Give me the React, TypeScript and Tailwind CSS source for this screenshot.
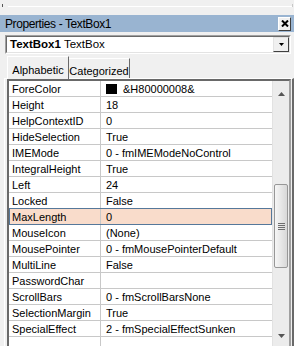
import clsx from "clsx";

const rows: { name: string; value: string; swatch?: boolean; selected?: boolean }[] = [
  { name: "ForeColor", value: "&H80000008&", swatch: true },
  { name: "Height", value: "18" },
  { name: "HelpContextID", value: "0" },
  { name: "HideSelection", value: "True" },
  { name: "IMEMode", value: "0 - fmIMEModeNoControl" },
  { name: "IntegralHeight", value: "True" },
  { name: "Left", value: "24" },
  { name: "Locked", value: "False" },
  { name: "MaxLength", value: "0", selected: true },
  { name: "MouseIcon", value: "(None)" },
  { name: "MousePointer", value: "0 - fmMousePointerDefault" },
  { name: "MultiLine", value: "False" },
  { name: "PasswordChar", value: "" },
  { name: "ScrollBars", value: "0 - fmScrollBarsNone" },
  { name: "SelectionMargin", value: "True" },
  { name: "SpecialEffect", value: "2 - fmSpecialEffectSunken" },
];

const Arrow = ({ up }: { up?: boolean }) => (
  <svg width="7" height="4" viewBox="0 0 7 4">
    <polygon points={up ? "3.5,0 7,4 0,4" : "0,0 7,0 3.5,4"} fill="#555" />
  </svg>
);

const ScrollBar = () => {
  return (
    <div className="flex w-[17px] shrink-0 flex-col border-l border-[#e2e2e2] bg-[#ececec]">
      <div className="flex h-[20px] items-end justify-center pb-[5px]">
        <Arrow up />
      </div>
      {/* thumb */}
      <div className="ml-[1px] mr-[1px] mt-[83px] flex h-[84px] items-center justify-center rounded-[2px] border border-[#979797] bg-linear-to-r from-[#f6f6f6] to-[#d8d8d8]">
        <div className="flex flex-col gap-[1px]">
          {[0, 1, 2, 3].map((i) => (
            <div key={i} className="h-px w-[7px] bg-[#6e6e6e]" />
          ))}
        </div>
      </div>
      <div className="flex-1" />
      <div className="flex h-[17px] items-start justify-center pt-[5px]">
        <Arrow />
      </div>
    </div>
  );
};

export default function App() {
  return (
    <div className="h-[346px] w-[300px] overflow-hidden bg-white font-['Liberation_Sans',Arial,sans-serif] text-[11px] text-black">
      <div className="flex h-full w-[294px] flex-col bg-[#f0f0f0]">
        {/* top strip */}
        <div className="flex h-[15px] shrink-0 items-start pt-[4px]">
          <div className="ml-[2px] h-[3px] w-px bg-[#555]" />
          <div className="ml-[5px] mt-[2px] h-px w-[284px] bg-white" />
          <div className="mt-0 h-[3px] w-px bg-[#c8c8c8]" />
        </div>

        {/* title bar */}
        <div className="flex h-[17px] shrink-0 items-center bg-[#99b4d1] pl-[5px] pr-[3px]">
          <span className="text-[12px] tracking-[-0.4px] whitespace-nowrap">Properties - TextBox1</span>
          <button className="ml-auto flex h-[14px] w-[13px] items-center justify-center border border-b-[#404040] border-l-white border-r-[#404040] border-t-white bg-[#f0f0f0]">
            <svg width="8" height="7" viewBox="0 0 8 7">
              <path d="M1 0.5 L7 6.5 M7 0.5 L1 6.5" stroke="#000" strokeWidth="2" />
            </svg>
          </button>
        </div>

        {/* object combo */}
        <div className="ml-[5px] mr-[3px] mt-[3px] h-[19px] shrink-0 border border-b-white border-l-[#a0a0a0] border-r-white border-t-[#a0a0a0]">
          <div className="flex h-full items-center border border-b-[#e3e3e3] border-l-[#696969] border-r-[#e3e3e3] border-t-[#696969] bg-white pl-[3px]">
            <span className="text-[11.5px] whitespace-nowrap">
              <b>TextBox1</b> TextBox
            </span>
            <div className="ml-auto flex h-[15px] w-[16px] items-center justify-center border border-b-[#404040] border-l-[#e3e3e3] border-r-[#404040] border-t-[#e3e3e3] bg-[#f0f0f0]">
              <svg width="5" height="3" viewBox="0 0 5 3">
                <polygon points="0,0 5,0 2.5,3" fill="#000" />
              </svg>
            </div>
          </div>
        </div>

        {/* tabs */}
        <div className="mt-[2px] flex h-[22px] shrink-0 items-end pl-[7px]">
          <div className="relative z-10 -mb-px flex h-[23px] w-[62px] items-start justify-center border border-b-0 border-l-white border-r-[#696969] border-t-white bg-[#f0f0f0] pt-[5px]">
            Alphabetic
          </div>
          <div className="flex h-[20px] w-[61px] items-start justify-center border border-b-0 border-l-0 border-r-[#696969] border-t-white pt-[4px]">
            Categorized
          </div>
        </div>

        {/* tab panel */}
        <div className="ml-[4px] flex min-h-0 flex-1 flex-col border-l border-r-2 border-t border-l-white border-r-[#696969] border-t-white pl-[2px] pr-px">
          <div className="flex min-h-0 flex-1 border-2 border-b-0 border-l-[#696969] border-r-[#a0a0a0] border-t-[#696969] bg-white">
            <div className="min-w-0 flex-1">
              {rows.map((row) => (
                <div
                  key={row.name}
                  className={clsx(
                    "flex h-[16px] border-b",
                    row.selected
                      ? "border-[#56789a] bg-[#f9dccb] shadow-[inset_1px_0_0_#56789a,inset_-1px_0_0_#56789a,0_-1px_0_#56789a]"
                      : "border-[#c8c8c8]"
                  )}
                >
                  <div className="w-[92px] shrink-0 border-r border-[#c8c8c8] pl-[3px] leading-[16px] whitespace-nowrap">
                    {row.name}
                  </div>
                  <div className="flex items-center pl-[5px] leading-[16px] whitespace-nowrap">
                    {row.swatch && <div className="mr-[6px] h-[10px] w-[11px] bg-black" />}
                    {row.value}
                  </div>
                </div>
              ))}
              {/* partly visible next row */}
              <div className="flex h-[16px]">
                <div className="w-[92px] shrink-0 border-r border-[#c8c8c8]" />
              </div>
            </div>
            <ScrollBar />
          </div>
        </div>
      </div>
    </div>
  );
}
